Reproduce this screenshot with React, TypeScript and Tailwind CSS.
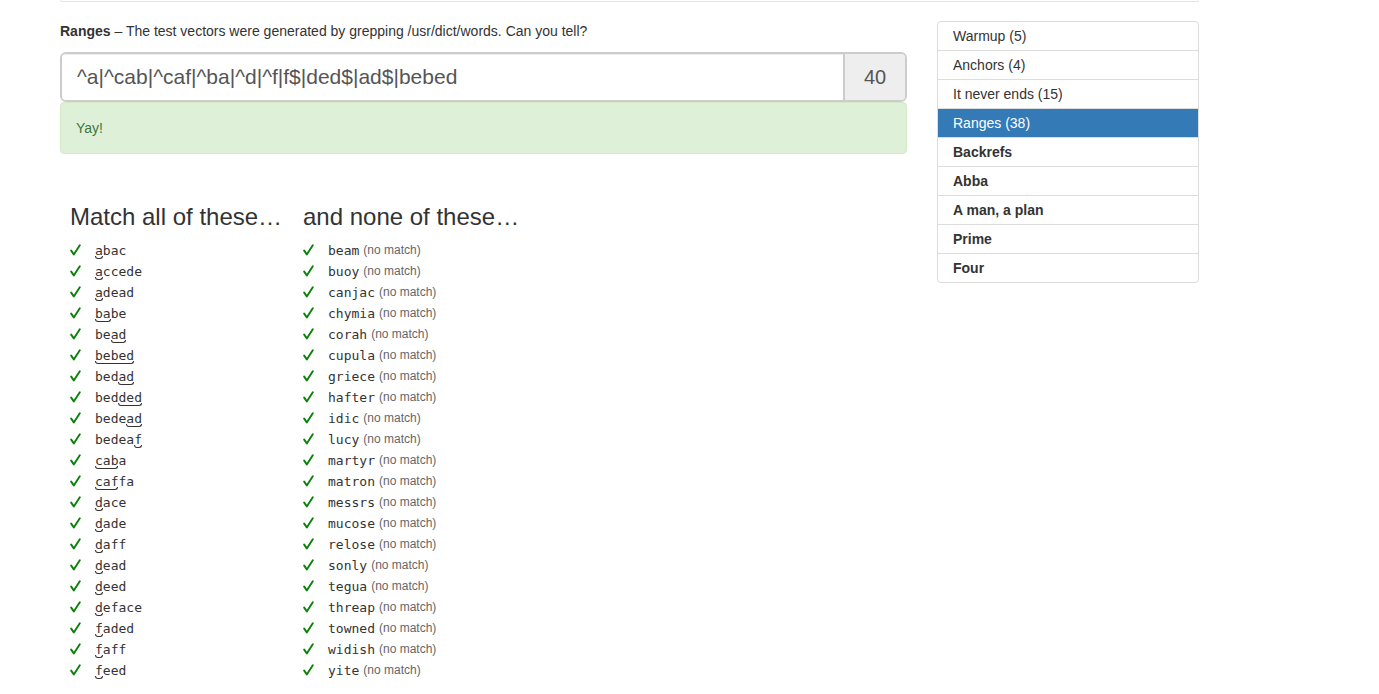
import React from "react";

type Word = { pre: string; m: string; post: string };

const matches: Word[] = [
  { pre: "", m: "a", post: "bac" },
  { pre: "", m: "a", post: "ccede" },
  { pre: "", m: "a", post: "dead" },
  { pre: "", m: "ba", post: "be" },
  { pre: "be", m: "ad", post: "" },
  { pre: "", m: "bebed", post: "" },
  { pre: "bed", m: "ad", post: "" },
  { pre: "bed", m: "ded", post: "" },
  { pre: "bede", m: "ad", post: "" },
  { pre: "bedea", m: "f", post: "" },
  { pre: "", m: "cab", post: "a" },
  { pre: "", m: "caf", post: "fa" },
  { pre: "", m: "d", post: "ace" },
  { pre: "", m: "d", post: "ade" },
  { pre: "", m: "d", post: "aff" },
  { pre: "", m: "d", post: "ead" },
  { pre: "", m: "d", post: "eed" },
  { pre: "", m: "d", post: "eface" },
  { pre: "", m: "f", post: "aded" },
  { pre: "", m: "f", post: "aff" },
  { pre: "", m: "f", post: "eed" },
];

const nonMatches = [
  "beam", "buoy", "canjac", "chymia", "corah", "cupula", "griece", "hafter", "idic", "lucy",
  "martyr", "matron", "messrs", "mucose", "relose", "sonly", "tegua", "threap", "towned", "widish", "yite",
];

const sidebar: { label: string; bold?: boolean; active?: boolean }[] = [
  { label: "Warmup (5)" },
  { label: "Anchors (4)" },
  { label: "It never ends (15)" },
  { label: "Ranges (38)", active: true },
  { label: "Backrefs", bold: true },
  { label: "Abba", bold: true },
  { label: "A man, a plan", bold: true },
  { label: "Prime", bold: true },
  { label: "Four", bold: true },
];

function Check() {
  return (
    <span className="w-[25px] shrink-0 flex items-center">
      <svg width="11" height="12" viewBox="0 0 11 12" className="mt-[-1px]">
        <path d="M1.2 6.6 L3.8 10.4 L9.8 1.2" fill="none" stroke="#0a800a" strokeWidth="1.9" strokeLinecap="round" strokeLinejoin="round" />
      </svg>
    </span>
  );
}

export default function App() {
  return (
    <div className="min-h-[694px] bg-white text-[#333] font-['Liberation_Sans',Arial,sans-serif] text-[14px] leading-[20px]">
      <div className="ml-[60px] w-[1139px]">
        <div className="h-[2px] border-x border-b border-[#e5e5e5] rounded-b-[3px]" />
        <div className="flex mt-[19px]">
          <div className="w-[847px]">
            <p className="h-[20px]">
              <b>Ranges</b> – The test vectors were generated by grepping /usr/dict/words. Can you tell?
            </p>
            <div className="mt-[11px] flex h-[50px] border-2 border-[#ccc] rounded-[6px] overflow-hidden">
              <div className="flex-1 flex items-center pl-[15px] text-[21px] text-[#555] bg-white shadow-[inset_0_1px_1px_rgba(0,0,0,0.075)]">
                ^a|^cab|^caf|^ba|^d|^f|f$|ded$|ad$|bebed
              </div>
              <div className="w-[62px] flex items-center justify-center border-l-2 border-[#ccc] bg-[#eee] text-[20px] text-[#555]">
                40
              </div>
            </div>
            <div className="h-[52px] border border-[#d6e9c6] bg-[#dff0d8] rounded-[4px] px-[15px] py-[15px] text-[#3c763d]">
              Yay!
            </div>
            <div className="flex mt-[50px] pl-[10px]">
              <div className="w-[233px]">
                <h3 className="text-[24px] leading-[26px] font-medium mb-[10px] whitespace-nowrap">Match all of these…</h3>
                <ul>
                  {matches.map((w, i) => (
                    <li key={i} className="flex h-[21px] items-center">
                      <Check />
                      <span className="font-['DejaVu_Sans_Mono',monospace] text-[13px] leading-[21px] text-[#333]">
                        {w.pre}
                        <span className="relative">
                          {w.m}
                          <span className="absolute left-0 right-0 -bottom-[1px] h-[3px] border-x border-b border-[#333] rounded-b-[3px]" />
                        </span>
                        {w.post}
                      </span>
                    </li>
                  ))}
                </ul>
              </div>
              <div>
                <h3 className="text-[24px] leading-[26px] font-medium mb-[10px] whitespace-nowrap">and none of these…</h3>
                <ul>
                  {nonMatches.map((w) => (
                    <li key={w} className="flex h-[21px] items-center">
                      <Check />
                      <span className="font-['DejaVu_Sans_Mono',monospace] text-[13px] leading-[21px] text-[#333]">{w}</span>
                      <span className="ml-[4px] text-[12px] leading-[21px] text-[#666]">(no match)</span>
                    </li>
                  ))}
                </ul>
              </div>
            </div>
          </div>
          <div className="ml-[30px] w-[262px]">
            <div className="border border-[#ddd] rounded-[4px] overflow-hidden">
              {sidebar.map((s, i) => (
                <div
                  key={s.label}
                  className={
                    "flex items-center px-[15px] " +
                    (i > 0 ? "h-[29px] border-t border-[#ddd] " : "h-[28px] ") +
                    (s.active ? "bg-[#337ab7] text-white border-[#337ab7] " : "text-[#333] ") +
                    (s.bold ? "font-bold" : "")
                  }
                >
                  {s.label}
                </div>
              ))}
            </div>
          </div>
        </div>
      </div>
    </div>
  );
}
